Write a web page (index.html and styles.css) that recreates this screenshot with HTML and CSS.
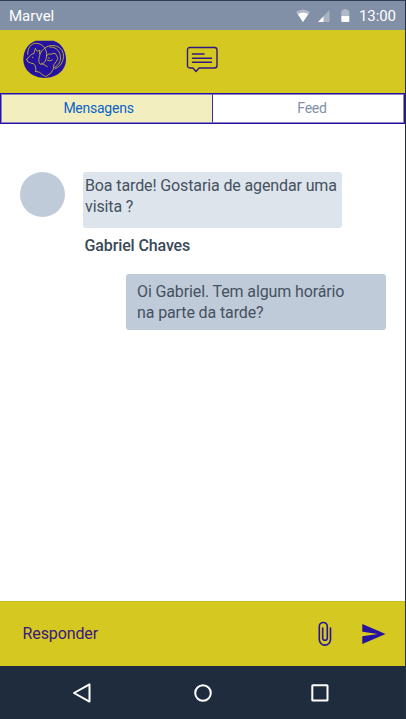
FILE: index.html
```html
<!DOCTYPE html>
<html lang="pt">
<head>
<meta charset="utf-8">
<title>Mensagens</title>
<link rel="stylesheet" href="styles.css">
</head>
<body>
<div class="phone">
  <div class="status">
    <span class="carrier">Marvel</span>
    <svg class="signals" width="56" height="14" viewBox="0 0 56 14">
      <path d="M0 3Q7 -2 14 3L7 13Z" fill="#b2bac7"/>
      <path d="M1.7 5.1Q7 1.8 12.3 5.1L7 13Z" fill="#fff"/>
      <path d="M22 13L33.5 1V13Z" fill="#aab3c1"/>
      <path d="M22 13L27.5 7.2V13Z" fill="#fff"/>
      <path d="M45.3 1.5h2v-1.3h4v1.3h2V7h-8Z" fill="#b2bac7"/>
      <path d="M45.3 7h8v5q0 1-1 1h-6q-1 0-1-1Z" fill="#fff"/>
    </svg>
    <span class="clock">13:00</span>
  </div>
  <header class="header">
    <svg class="logo" width="44" height="39" viewBox="0 0 132 117">
      <path d="M38 2H92C115 10 129 32 129 58C129 92 100 114 65 114C30 114 1 92 1 58C1 32 15 10 38 2Z" fill="#2512a0"/>
      <g fill="none" stroke="#d5c820" stroke-opacity=".88" stroke-width="2.700" stroke-linecap="round" stroke-linejoin="round">
        <path d="M14 43C14 22 24 10 40 10C60 11 73 29 71 48C69 66 58 76 51 72C43 66 49 37 63 26C80 11 107 14 118 33C128 54 116 80 96 86"/>
        <path d="M80 21C96 20 109 30 112 47C115 64 106 76 95 82"/>
        <path d="M11 58L24 44L33 40L37 25L43 34L51 31L49 42M11 58Q12 68 23 69Q34 69 37 78Q40 88 38 94"/>
        <path d="M56 70L73 80M38 94Q50 94 58 104L68 110Q87 101 91 87Q90 72 100 64Q109 54 101 47Q99 38 90 40Q87 44 78 42L70 47M73 61Q80 65 88 60"/>
        <path d="M28 52h2M76 54h3"/>
      </g>
    </svg>
    <svg class="chat" width="33" height="28" viewBox="0 0 33 28" fill="none" stroke="#2f1785" stroke-linejoin="round" stroke-linecap="round">
      <path d="M4 1.500H28.500Q31 1.500 31 4V19.500Q31 22 28.500 22H13L10 25.500L7 22H4Q1.500 22 1.500 19.500V4Q1.500 1.500 4 1.500Z" stroke-width="1.400"/>
      <path d="M6.500 8H18M6.500 12.200H25.500M6.500 16.300H25.500" stroke-width="1.500"/>
    </svg>
  </header>
  <nav class="tabs">
    <div class="tab active"><span>Mensagens</span></div>
    <div class="tab"><span>Feed</span></div>
  </nav>
  <main class="thread">
    <div class="incoming">
      <div class="avatar"></div>
      <div>
        <div class="bubble received">Boa tarde! Gostaria de agendar uma<br>visita ?</div>
        <div class="sender">Gabriel Chaves</div>
      </div>
    </div>
    <div class="bubble sent">Oi Gabriel. Tem algum horário<br>na parte da tarde?</div>
  </main>
  <footer class="reply">
    <span class="placeholder">Responder</span>
    <svg class="clip" width="14" height="26" viewBox="0 0 14 26" fill="none" stroke="#2512a0" stroke-width="1.600" stroke-linecap="round">
      <path d="M12.500 7V18.500A5.600 5.600 0 0 1 1.300 18.500V5.500A4 4 0 0 1 9.300 5.500V17A2.300 2.300 0 0 1 4.700 17V7"/>
    </svg>
    <svg class="send" width="24" height="20" viewBox="0 0 24 20"><path d="M.3 0L23.500 10L.3 20V12.200L16 10L.3 7.800Z" fill="#2512a0"/></svg>
  </footer>
  <div class="navbar">
    <svg width="20" height="22" viewBox="0 0 20 22"><path d="M2 11L17.500 2.400V19.600Z"/></svg>
    <svg class="home" width="20" height="20" viewBox="0 0 20 20"><circle cx="10" cy="10" r="7.800"/></svg>
    <svg width="20" height="20" viewBox="0 0 20 20"><rect x="2.300" y="2.300" width="15.200" height="15.200" rx=".5"/></svg>
  </div>
</div>
</body>
</html>
```
FILE: styles.css
```css
* { box-sizing: border-box; }
body { margin: 0; font-family: Roboto, "Liberation Sans", sans-serif; }
.phone {
  width: 406px; height: 719px;
  display: flex; flex-direction: column;
  background: #fff;
  border-top: 1px solid #343d50;
  border-right: 1px solid #26313f;
}
.status {
  height: 29px; padding: 0 8px 0 9px;
  display: flex; align-items: center;
  background: #8190a6; color: #fff;
}
.carrier { font-size: 15px; }
.signals { margin-left: auto; }
.clock { width: 38px; margin-left: 7px; font-size: 15px; letter-spacing: -.1px; white-space: nowrap; }
.header {
  height: 63px; padding: 10px 0 0 23px;
  display: flex; align-items: flex-start;
  background: #d5c820;
}
.chat { margin: 6px 0 0 119px; }
.tabs {
  height: 31px; display: grid; grid-template-columns: 212px 1fr;
  border: 1px solid #2512a0;
}
.tab {
  display: flex; align-items: center; justify-content: center;
  padding: 0 0 2px 8px;
  border: 1px solid #8d80c8; border-left: 0;
  font-size: 14px; letter-spacing: -.25px; color: #8190a8;
}
.active { background: #f3eec0; color: #0864c8; border-left: 1px solid #8d80c8; border-right: 1.5px solid #3d2ba5; padding-left: 0; padding-right: 17px; }
.thread { flex: 1; padding: 48px 19.5px 0 20px; display: flex; flex-direction: column; font-size: 16px; line-height: 21px; letter-spacing: -.12px; color: #45515f; }
.incoming { display: flex; gap: 17.5px; }
.avatar { width: 45px; height: 45px; border-radius: 50%; background: #c0cbd9; }
.bubble { width: 259.5px; height: 56px; border-radius: 3px; white-space: nowrap; }
.received { background: #dde4ec; padding: 3px 2.5px; }
.sender { margin: 6.500px 0 0 2px; font-weight: 500; color: #3a4857; }
.sent { align-self: flex-end; margin-top: 18.5px; background: #c0cbd9; padding: 6.500px 11px; }
.reply {
  height: 65px; padding: 0 19px 0 22.5px;
  display: flex; align-items: center;
  background: #d5c820; border-top: 1px solid #c9bd20;
}
.placeholder { font-size: 16px; letter-spacing: -.1px; color: #381783; padding-bottom: 2px; }
.clip { margin-left: auto; }
.send { margin-left: 30px; }
.navbar {
  height: 53px; padding: 0 75.5px 0 71.5px;
  display: flex; align-items: center; justify-content: space-between;
  background: #1e2c3d;
}
.navbar svg { fill: none; stroke: #fff; stroke-width: 2; stroke-linejoin: round; }
.home { margin-left: 4px; }
```
